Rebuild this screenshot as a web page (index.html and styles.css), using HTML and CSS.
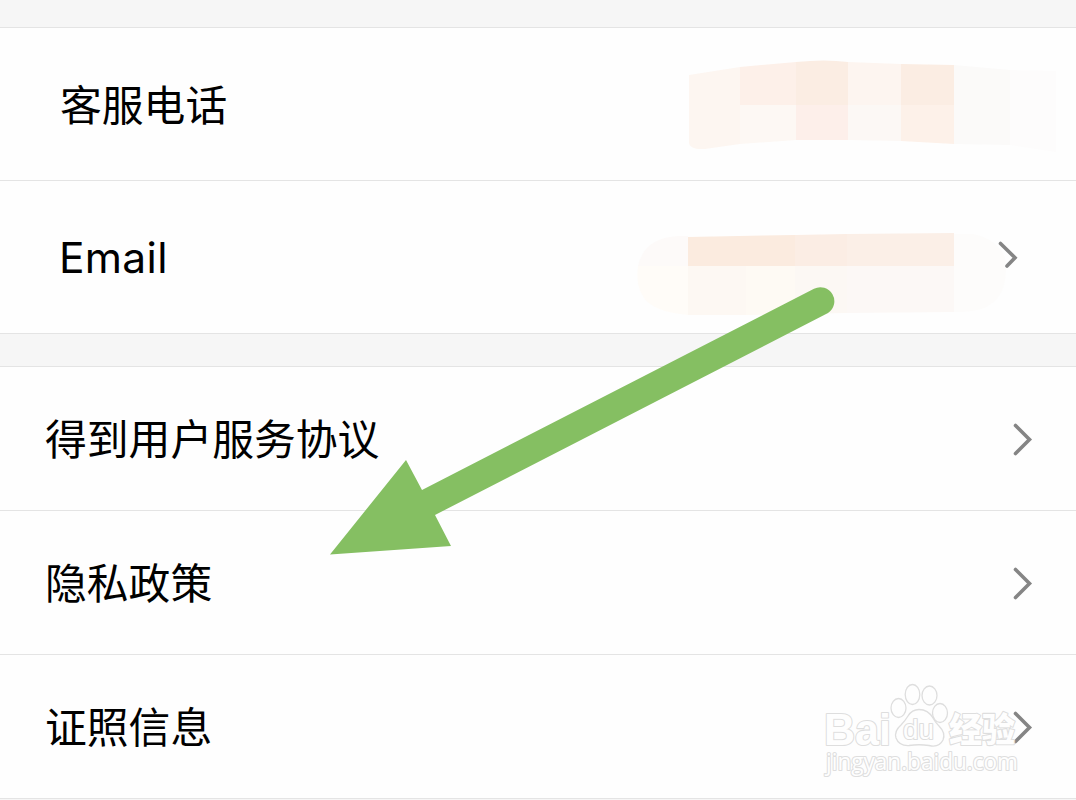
FILE: index.html
```
<!DOCTYPE html>
<html lang="zh-CN">
<head>
    <meta charset="UTF-8">
    <meta name="viewport" content="width=device-width, initial-scale=1.0">
    <title>得到</title>

    <link rel="stylesheet" href="styles.css">
</head>
<body>
    <main class="page">
        <section class="group contact">
            <div class="row">
                <span class="label">客服电话</span>
                <svg class="mosaic" width="376" height="100" viewBox="0 0 376 100">
                    <path fill="#fdf6f1" d="M9 22 L60 14 V91 L25 96 Q9 97 9 89Z"/>
                    <path fill="#fdf0e9" d="M60 14 L116 9 V52 H60Z"/>
                    <path fill="#fdf8f4" d="M60 52 H116 V87 L60 91Z"/>
                    <path fill="#fbede3" d="M116 9 Q145 6 168 9 V52 H116Z"/>
                    <path fill="#fdefea" d="M116 52 H168 V87 H116Z"/>
                    <path fill="#fdf5f0" d="M168 9 L221 11 V52 H168Z"/>
                    <path fill="#fcf8f5" d="M168 52 H221 V88 L168 87Z"/>
                    <path fill="#fbede3" d="M221 11 L274 12 V52 H221Z"/>
                    <path fill="#fdf1e9" d="M221 52 H274 V91 L221 88Z"/>
                    <path fill="#fbfaf9" d="M274 12 L330 17 V92 L274 91Z"/>
                    <path fill="#fdfcfc" d="M330 17 L376 18 V99 L330 92Z"/>
                </svg>
            </div>
            <div class="row">
                <span class="label latin">Email</span>
                <svg class="mosaic" width="380" height="90" viewBox="0 0 380 90">
                    <path fill="#fdfaf9" d="M8 38 Q14 10 48 8 H58 V38Z"/>
                    <path fill="#fffcf8" d="M8 38 H58 V87 Q24 84 14 70 Q5 57 8 38Z"/>
                    <path fill="#fbebdf" d="M58 9 L165 7 V38 H58Z"/>
                    <path fill="#fbede4" d="M165 7 L217 6 V38 H165Z"/>
                    <path fill="#fbefe7" d="M217 6 L324 5 V38 H217Z"/>
                    <path fill="#fdf8f3" d="M58 38 H116 V87 H58Z"/>
                    <path fill="#fefaf4" d="M116 38 H165 V86 L116 87Z"/>
                    <path fill="#fcf8f4" d="M165 38 H217 V85 L165 86Z"/>
                    <path fill="#fcf8f6" d="M217 38 H324 V84 L217 85Z"/>
                    <path fill="#fdfcfb" d="M324 6 H343 Q365 10 375 29 Q380 65 358 78 Q348 84 324 84Z"/>
                    <path class="chevron" d="M370.500 15.500 L385 29.700 L377 38"/>
                </svg>
            </div>
        </section>

        <section class="group">
            <div class="row">
                <span class="label">得到用户服务协议</span>
                <svg class="arrow" width="20" height="34" viewBox="0 0 20 34">
                    <path class="chevron" d="M2.500 3.500 L16.500 17.500 L2.500 31.500"/>
                </svg>
            </div>
            <div class="row">
                <span class="label">隐私政策</span>
                <svg class="arrow" width="20" height="34" viewBox="0 0 20 34">
                    <path class="chevron" d="M2.500 3.500 L16.500 17.500 L2.500 31.500"/>
                </svg>
            </div>
            <div class="row">
                <span class="label">证照信息</span>
                <svg class="arrow" width="20" height="34" viewBox="0 0 20 34">
                    <path class="chevron" d="M2.500 3.500 L16.500 17.500 L2.500 31.500"/>
                </svg>
            </div>
        </section>

        <!-- Green pointer to the privacy policy row -->
        <svg class="pointer" width="520" height="280" viewBox="320 280 520 280">
            <path d="M330 554.500 L406 460 L422 490 L814 288.800 A14 14 0 0 1 828 313 L435 515 L451 546 Z"/>
        </svg>

        <!-- Watermark -->
        <svg class="watermark" width="200" height="110" viewBox="820 675 200 110">
            <text class="brand" x="824" y="745" textLength="67" lengthAdjust="spacingAndGlyphs">Bai</text>
            <ellipse cx="898.500" cy="708" rx="7.500" ry="9.500"/>
            <ellipse cx="912.500" cy="694.500" rx="7.300" ry="10"/>
            <ellipse cx="929.500" cy="695.500" rx="7.500" ry="9.500"/>
            <ellipse cx="940" cy="713" rx="7.500" ry="9.500"/>
            <path d="M919 709.500 Q928 709.500 933 718 Q935 722 939 726 Q946 733 943 740 Q939 748 929 745.500 Q919 744 909 745.500 Q899 746 896 738 Q894 731 901 725 Q905 721 908 716 Q912 709.500 919 709.500Z"/>
            <text class="du" x="903" y="739" textLength="31" lengthAdjust="spacingAndGlyphs">du</text>
            <text class="jingyan" x="949" y="742" textLength="66" lengthAdjust="spacingAndGlyphs">经验</text>
            <text class="site" x="826" y="770" textLength="192" lengthAdjust="spacingAndGlyphs">jingyan.baidu.com</text>
        </svg>
    </main>
</body>
</html>
```

FILE: styles.css
```
* {
    margin: 0;
    padding: 0;
    box-sizing: border-box;
}

body {
    font-family: "Noto Sans CJK SC", sans-serif;
    background-color: #f6f6f6;
    color: #000;
}

.page {
    position: relative;
    height: 800px;
    padding-top: 27px;
    display: flex;
    flex-direction: column;
    gap: 32px;
    overflow: hidden;
}

.group {
    border-top: 1px solid #e4e4e4;
    background-color: #fefefe;
}

/* List rows */
.row {
    height: 144px;
    padding: 0 43px 0 45px;
    display: flex;
    align-items: center;
    justify-content: space-between;
    border-bottom: 1px solid #e4e4e4;
}

.contact .row {
    height: 153px;
    padding: 0 20px 0 60px;
}

.contact .row + .row {
    padding-right: 66px;
}

.label {
    font-size: 41.8px;
    line-height: 60px;
    padding-bottom: 3px;
}

.latin {
    font-family: Inter, sans-serif;
    font-size: 42.5px;
    font-weight: 400;
    letter-spacing: 0.3px;
    padding-top: 2px;
    padding-bottom: 0;
    margin-left: -1px;
}

.mosaic {
    overflow: visible;
    margin-bottom: 2px;
}

.contact .row + .row .mosaic {
    margin-top: 32px;
    margin-bottom: 0;
}

.chevron {
    fill: none;
    stroke: #858585;
    stroke-width: 3.6;
    stroke-linecap: round;
}

/* Things drawn over the list */
.pointer {
    position: absolute;
    left: 320px;
    top: 280px;
    fill: #85bf62;
}

.watermark {
    position: absolute;
    left: 820px;
    top: 675px;
    fill: #fefefe;
    stroke: #dedede;
    stroke-width: 1.3;
}

.watermark text {
    paint-order: stroke;
    stroke-width: 2.2;
    stroke-linejoin: round;
}

.brand {
    font-family: "Liberation Sans", Arial, sans-serif;
    font-size: 44px;
    font-weight: bold;
}

.du {
    font-family: "Liberation Sans", Arial, sans-serif;
    font-size: 27px;
}

.jingyan {
    font-size: 34px;
    font-weight: 900;
}

.site {
    font-family: "Open Sans", sans-serif;
    font-size: 23px;
}
```
